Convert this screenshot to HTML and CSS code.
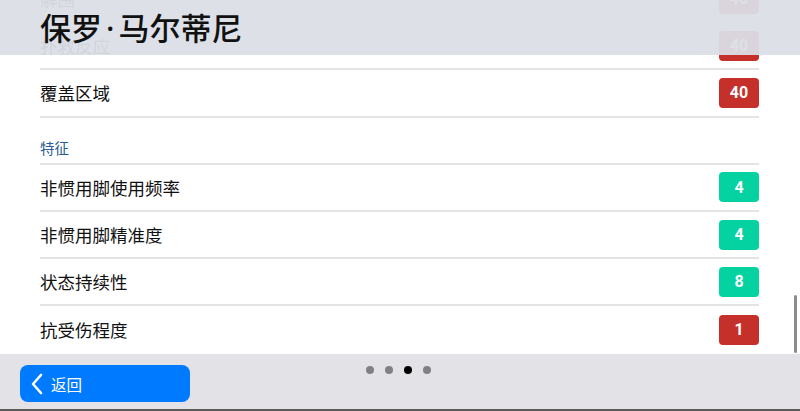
FILE: index.html
```html
<!DOCTYPE html>
<html lang="zh">
<head>
<meta charset="utf-8" />
<meta name="viewport" content="width=device-width, initial-scale=1" />
<title>保罗·马尔蒂尼</title>
<link rel="stylesheet" href="styles.css">
</head>
<body>
  <div class="screen">
    <div class="scroller">
      <ul class="list">
        <li class="row"><span class="label">解围</span><span class="badge red">40</span></li>
        <li class="row"><span class="label">扑救反应</span><span class="badge red">40</span></li>
        <li class="row"><span class="label">覆盖区域</span><span class="badge red">40</span></li>
        <li class="section">特征</li>
        <li class="row"><span class="label">非惯用脚使用频率</span><span class="badge green">4</span></li>
        <li class="row"><span class="label">非惯用脚精准度</span><span class="badge green">4</span></li>
        <li class="row"><span class="label">状态持续性</span><span class="badge green">8</span></li>
        <li class="row"><span class="label">抗受伤程度</span><span class="badge red">1</span></li>
      </ul>
      <div class="scrollbar"></div>
    </div>
    <header class="title-bar">
      <h1>保罗<span class="dot-sep">·</span>马尔蒂尼</h1>
    </header>
    <footer class="footer">
      <button class="back" type="button">
        <svg width="14" height="22" viewBox="0 0 14 22" aria-hidden="true">
          <path d="M11 2 L3 11 L11 20" fill="none" stroke="#fff" stroke-width="2.6" stroke-linecap="round" stroke-linejoin="round"/>
        </svg>
        <span>返回</span>
      </button>
      <div class="dots">
        <span class="dot"></span>
        <span class="dot"></span>
        <span class="dot active"></span>
        <span class="dot"></span>
      </div>
    </footer>
  </div>
</body>
</html>
```

FILE: styles.css
```css
* {
  box-sizing: border-box;
}
html, body {
  margin: 0;
  padding: 0;
  background: #fff;
}
body {
  font-family: "Noto Sans CJK SC", "Noto Sans", sans-serif;
  color: #111;
}
.screen {
  position: relative;
  width: 800px;
  height: 411px;
  display: flex;
  flex-direction: column;
  overflow: hidden;
}
.scroller {
  position: relative;
  height: 354px;
  flex: none;
  overflow: hidden;
}
.list {
  list-style: none;
  margin: -24px 0 0;
  padding: 0 41px 0 40px;
}
.row {
  height: 47.2px;
  display: flex;
  align-items: center;
  justify-content: space-between;
  border-bottom: 2px solid #e4e4e6;
}
.row:last-child {
  border-bottom: none;
}
.label {
  font-size: 17.5px;
  line-height: 1;
  color: #111;
}
.section {
  height: 47.2px;
  display: flex;
  align-items: flex-end;
  padding-bottom: 5px;
  font-size: 14.5px;
  color: #2b5c95;
  border-bottom: 2px solid #e4e4e6;
}
.badge {
  width: 40px;
  height: 30px;
  border-radius: 4px;
  display: flex;
  align-items: center;
  justify-content: center;
  color: #fff;
  font-family: "Roboto", "DejaVu Sans", sans-serif;
  font-weight: 700;
  font-size: 16px;
}
.red {
  background: #c6302a;
}
.green {
  background: #04d2a0;
}
.scrollbar {
  position: absolute;
  right: 3px;
  top: 295px;
  width: 3px;
  height: 58px;
  border-radius: 2px;
  background: #8c8c8c;
}
.title-bar {
  position: absolute;
  left: 0;
  top: 0;
  width: 800px;
  height: 55px;
  background: rgba(219, 222, 230, 0.95);
  padding-left: 40px;
}
.title-bar h1 {
  margin: -1px 0 0;
  font-size: 31px;
  font-weight: 500;
  line-height: 55px;
  color: #111;
}
.dot-sep {
  font-family: "Noto Sans", sans-serif;
  padding: 0 4px;
}
.footer {
  flex: 1;
  position: relative;
  background: #e3e3e7;
  border-bottom: 2px solid #5a5a5a;
  padding: 11px 0 0 20px;
}
.back {
  display: flex;
  align-items: center;
  gap: 7px;
  width: 170px;
  height: 37px;
  padding: 0 0 0 10px;
  border: none;
  border-radius: 8px;
  background: #007bff;
  color: #fff;
  font-family: inherit;
  font-size: 15.5px;
}
.dots {
  position: absolute;
  left: 366px;
  top: 12px;
  display: flex;
  gap: 11px;
}
.dot {
  width: 8px;
  height: 8px;
  border-radius: 50%;
  background: #808083;
}
.dot.active {
  background: #000;
}
```
